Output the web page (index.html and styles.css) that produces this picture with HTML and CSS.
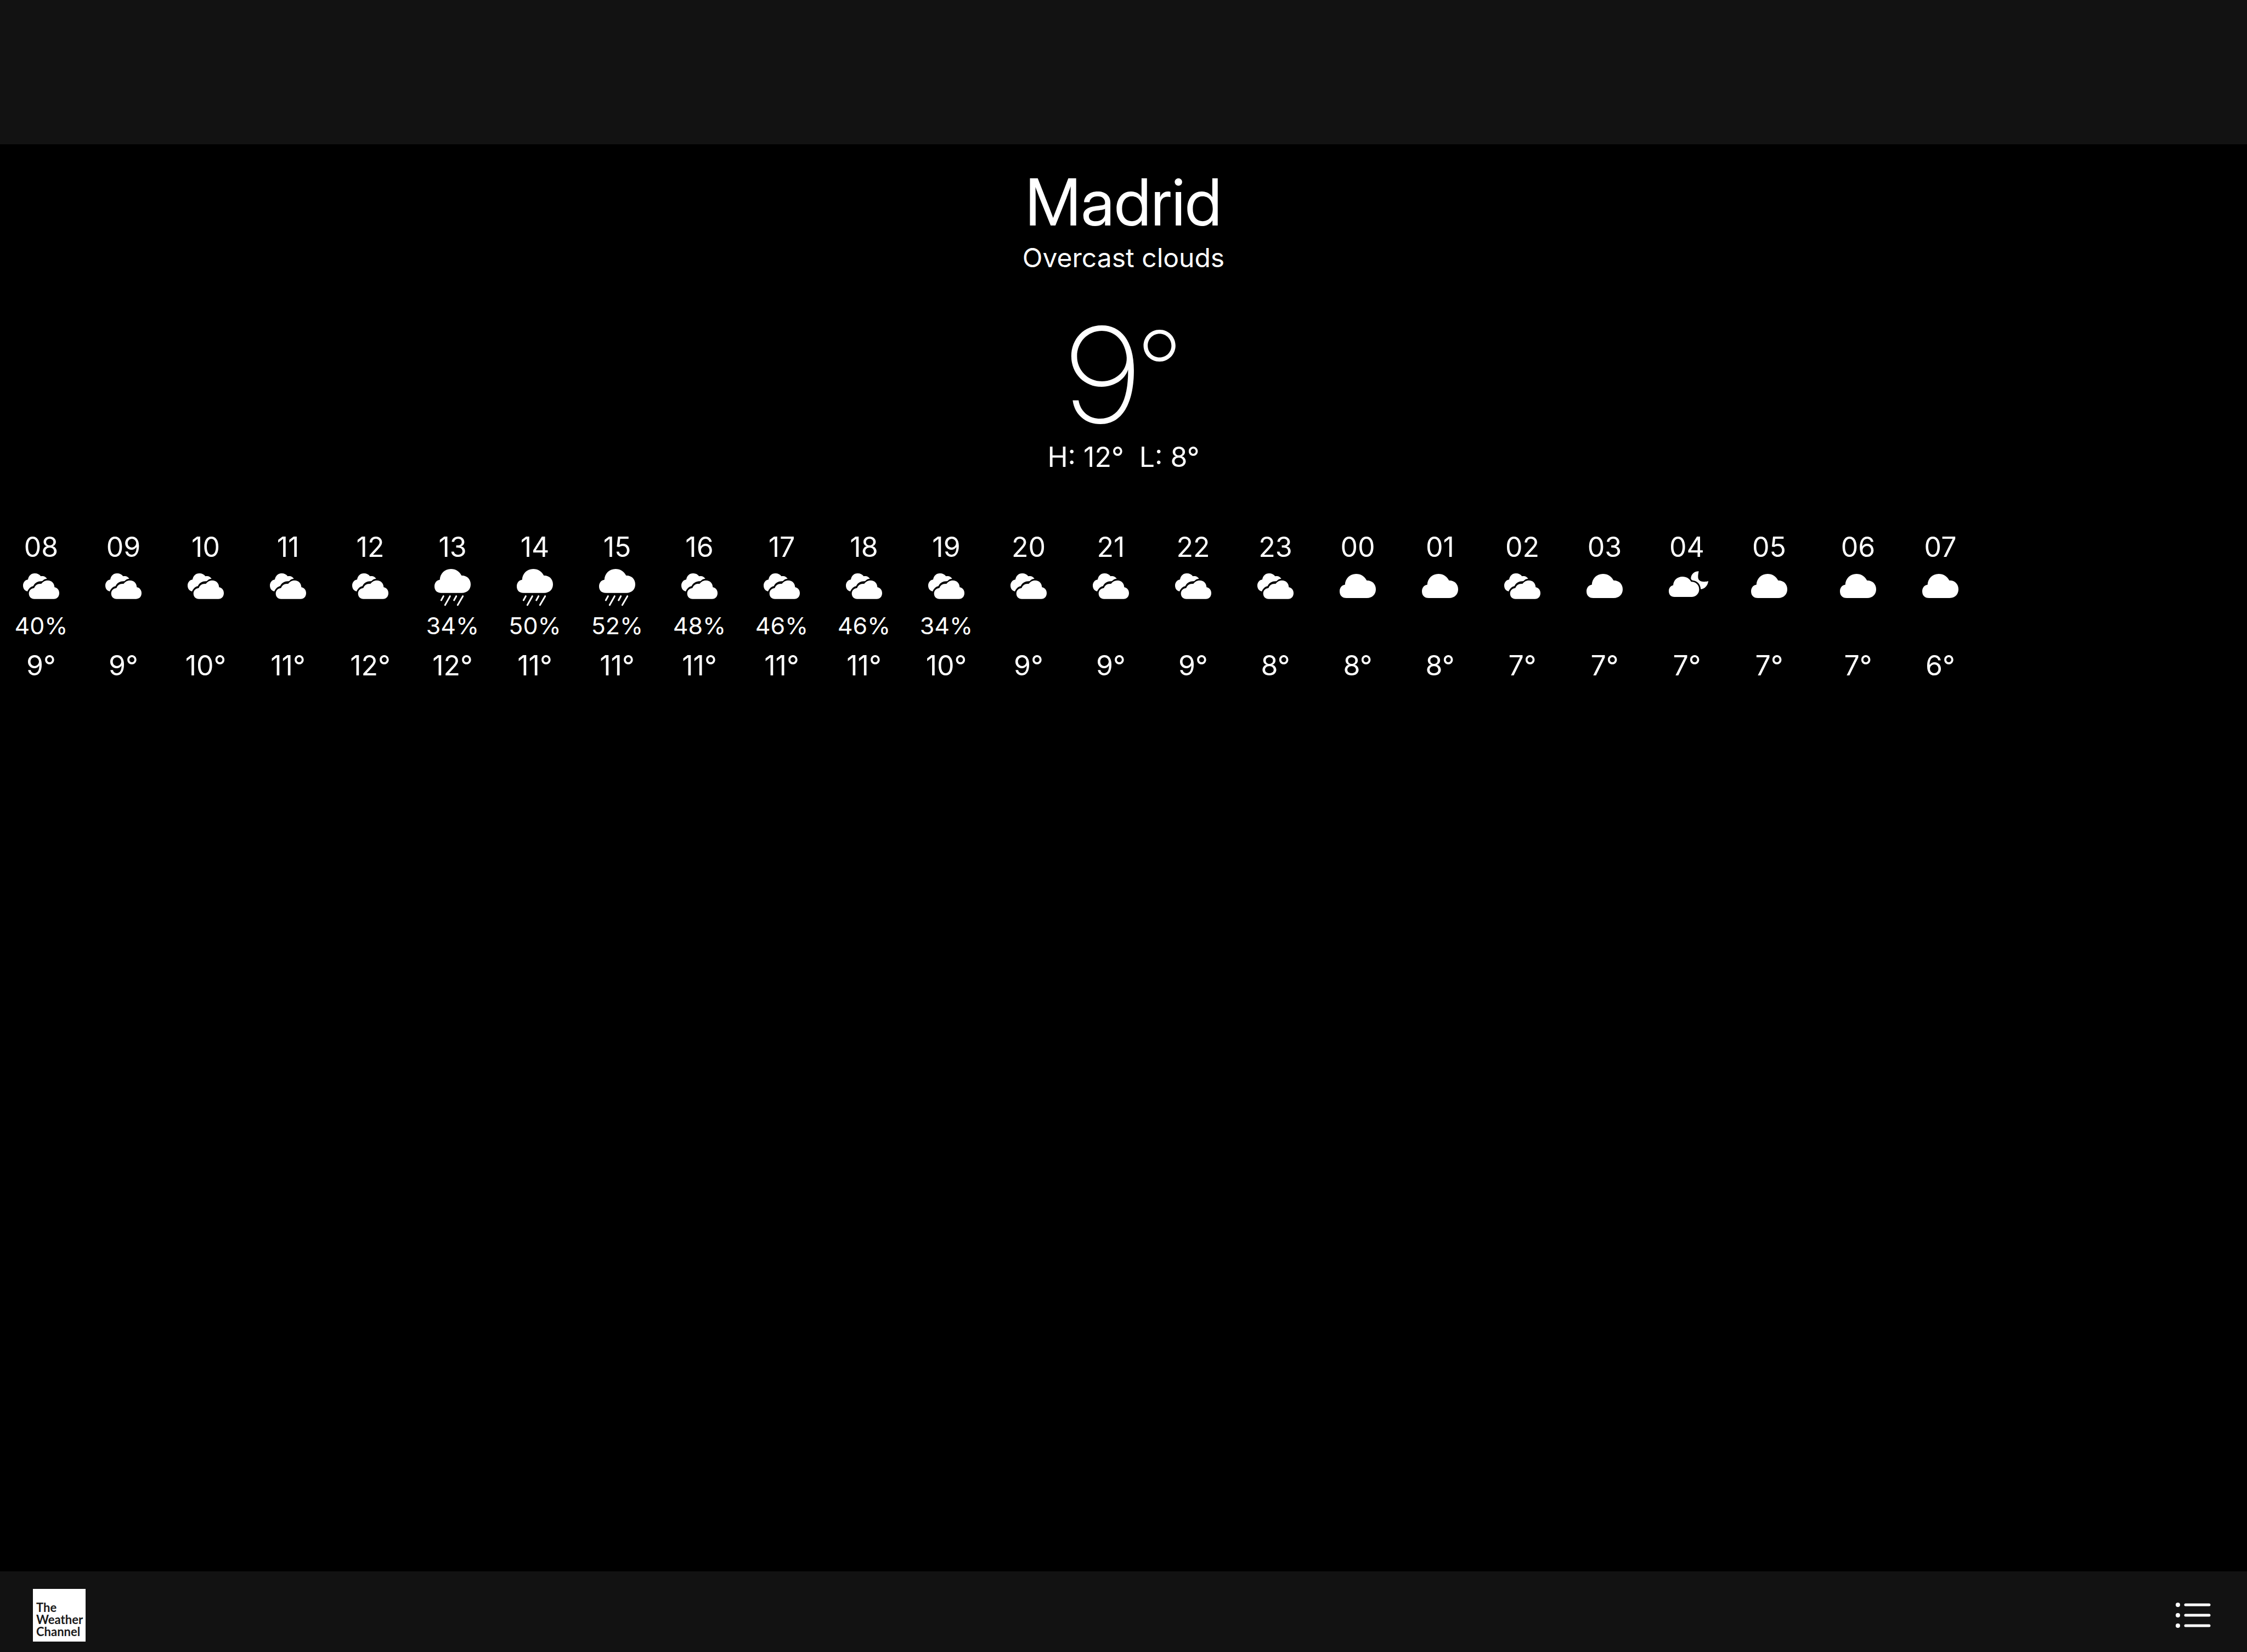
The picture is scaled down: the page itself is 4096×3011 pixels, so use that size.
FILE: index.html
```html
<!DOCTYPE html>
<html lang="en">
<head>
<meta charset="utf-8">
<meta name="viewport" content="width=device-width, initial-scale=1">
<title>Weather – Madrid</title>
<link rel="stylesheet" href="styles.css">
</head>
<body>
<svg class="sprite" aria-hidden="true">
  <symbol id="cloud" viewBox="126 228 216 216">
    <path d="M164 393C138 393 126 377 126 356C126 336 138 322 155 320C157 286 182 261 216 261C242 261 263 275 274 297C302 296 324 315 324 345C324 374 304 393 275 393Z"/>
  </symbol>
  <symbol id="clouds" viewBox="126 228 216 216">
    <path d="M150 357C135 353 126 342 126 325C126 307 137 295 153 292C156 272 170 258 190 258C205 258 216 264 223 274C238 270 249 276 257 287C246 288 238 292 231 301C209 300 190 309 182 328C169 330 157 341 150 357Z"/>
    <path d="M188 398C170 398 158 385 158 368C158 351 170 340 187 338C193 322 206 313 226 315C236 302 248 297 262 297C283 297 297 312 298 334C313 336 324 349 324 366C324 385 312 398 294 398Z"/>
  </symbol>
  <symbol id="rain" viewBox="126 228 216 216">
    <path d="M164 365C138 365 126 350 126 329C126 309 138 295 155 293C157 259 182 234 216 234C242 234 263 248 274 270C302 269 324 288 324 318C324 347 304 365 275 365Z"/>
    <path class="drops" d="M175 383L163 405M211 383L184 431M245 383L233 405M281 383L253 431"/>
  </symbol>
  <symbol id="cloud-moon" viewBox="126 228 216 216">
    <path d="M158 387C137 387 126 374 126 355C126 337 136 326 150 323C152 295 173 276 201 276C223 276 240 287 248 304C274 304 292 321 292 346C292 370 274 387 250 387Z"/>
    <path d="M290 247C265 246 246 264 247 288C249 293 253 296 257 297C282 299 299 317 301 345C322 343 340 325 342 300C333 304 322 304 311 303C296 302 286 294 286 277C286 265 288 256 290 247Z"/>
  </symbol>
</svg>

<header class="top-bar"></header>

<main class="weather">
  <h1 class="city">Madrid</h1>
  <p class="summary">Overcast clouds</p>
  <p class="current">9<span class="degree">°</span></p>
  <p class="range">H: 12°&nbsp; L: 8°</p>

  <ol class="hours">
    <li class="hour"><time>08</time><svg class="icon"><use href="#clouds"/></svg><span class="chance">40%</span><span class="temp">9°</span></li>
    <li class="hour"><time>09</time><svg class="icon"><use href="#clouds"/></svg><span class="chance"></span><span class="temp">9°</span></li>
    <li class="hour"><time>10</time><svg class="icon"><use href="#clouds"/></svg><span class="chance"></span><span class="temp">10°</span></li>
    <li class="hour"><time>11</time><svg class="icon"><use href="#clouds"/></svg><span class="chance"></span><span class="temp">11°</span></li>
    <li class="hour"><time>12</time><svg class="icon"><use href="#clouds"/></svg><span class="chance"></span><span class="temp">12°</span></li>
    <li class="hour"><time>13</time><svg class="icon"><use href="#rain"/></svg><span class="chance">34%</span><span class="temp">12°</span></li>
    <li class="hour"><time>14</time><svg class="icon"><use href="#rain"/></svg><span class="chance">50%</span><span class="temp">11°</span></li>
    <li class="hour"><time>15</time><svg class="icon"><use href="#rain"/></svg><span class="chance">52%</span><span class="temp">11°</span></li>
    <li class="hour"><time>16</time><svg class="icon"><use href="#clouds"/></svg><span class="chance">48%</span><span class="temp">11°</span></li>
    <li class="hour"><time>17</time><svg class="icon"><use href="#clouds"/></svg><span class="chance">46%</span><span class="temp">11°</span></li>
    <li class="hour"><time>18</time><svg class="icon"><use href="#clouds"/></svg><span class="chance">46%</span><span class="temp">11°</span></li>
    <li class="hour"><time>19</time><svg class="icon"><use href="#clouds"/></svg><span class="chance">34%</span><span class="temp">10°</span></li>
    <li class="hour"><time>20</time><svg class="icon"><use href="#clouds"/></svg><span class="chance"></span><span class="temp">9°</span></li>
    <li class="hour"><time>21</time><svg class="icon"><use href="#clouds"/></svg><span class="chance"></span><span class="temp">9°</span></li>
    <li class="hour"><time>22</time><svg class="icon"><use href="#clouds"/></svg><span class="chance"></span><span class="temp">9°</span></li>
    <li class="hour"><time>23</time><svg class="icon"><use href="#clouds"/></svg><span class="chance"></span><span class="temp">8°</span></li>
    <li class="hour"><time>00</time><svg class="icon"><use href="#cloud"/></svg><span class="chance"></span><span class="temp">8°</span></li>
    <li class="hour"><time>01</time><svg class="icon"><use href="#cloud"/></svg><span class="chance"></span><span class="temp">8°</span></li>
    <li class="hour"><time>02</time><svg class="icon"><use href="#clouds"/></svg><span class="chance"></span><span class="temp">7°</span></li>
    <li class="hour"><time>03</time><svg class="icon"><use href="#cloud"/></svg><span class="chance"></span><span class="temp">7°</span></li>
    <li class="hour"><time>04</time><svg class="icon"><use href="#cloud-moon"/></svg><span class="chance"></span><span class="temp">7°</span></li>
    <li class="hour"><time>05</time><svg class="icon"><use href="#cloud"/></svg><span class="chance"></span><span class="temp">7°</span></li>
    <li class="hour hour-spaced"><time>06</time><svg class="icon"><use href="#cloud"/></svg><span class="chance"></span><span class="temp">7°</span></li>
    <li class="hour"><time>07</time><svg class="icon"><use href="#cloud"/></svg><span class="chance"></span><span class="temp">6°</span></li>
  </ol>
</main>

<footer class="toolbar">
  <a class="provider" href="#">The<br>Weather<br>Channel</a>
  <button class="list-button" type="button" aria-label="Locations">
    <svg viewBox="0 0 64 48">
      <path class="rows" d="M18 5H61M18 24H61M18 43H61"/>
      <circle cx="4" cy="5" r="4"/><circle cx="4" cy="24" r="4"/><circle cx="4" cy="43" r="4"/>
    </svg>
  </button>
</footer>
</body>
</html>
```
FILE: styles.css
```css
* {
  box-sizing: border-box;
  margin: 0;
  padding: 0;
}

body {
  display: flex;
  flex-direction: column;
  min-height: 100vh;
  background: #000;
  color: #fff;
  font-family: Inter, "Liberation Sans", sans-serif;
  font-size: 50px;
  line-height: 60px;
}

.sprite {
  position: absolute;
  width: 0;
  height: 0;
}

.top-bar {
  height: 263px;
  background: #121212;
}

.weather {
  flex: 1;
  padding-top: 33px;
  text-align: center;
}

.city,
.current {
  font-family: "Inter Display", Inter, "Liberation Sans", sans-serif;
}

.city {
  font-size: 118px;
  font-weight: 400;
  line-height: 144px;
}

.summary {
  font-size: 48px;
}

.current {
  margin-top: 63px;
  font-size: 242px;
  font-weight: 200;
  line-height: 240px;
}

.degree {
  font-size: 190px;
  line-height: 0;
  vertical-align: 30px;
}

.hours {
  display: flex;
  margin-top: 104px;
  list-style: none;
}

.hour {
  display: flex;
  flex: none;
  flex-direction: column;
  width: 150px;
}

.hour-spaced {
  margin-left: 12px;
}

.icon {
  width: 72px;
  height: 72px;
  margin: 8px 0 8px 42px;
  fill: #fff;
}

.drops {
  fill: none;
  stroke: #fff;
  stroke-width: 9;
  stroke-linecap: round;
}

.chance {
  height: 50px;
  margin-bottom: 18px;
  font-size: 43px;
  line-height: 50px;
}

.toolbar {
  display: flex;
  align-items: flex-start;
  justify-content: space-between;
  height: 147px;
  padding: 32px 66px 0 60px;
  background: #121212;
}

.provider {
  width: 96px;
  height: 96px;
  padding: 23px 0 0 6px;
  background: #fff;
  color: #1a1a1a;
  font-family: Lato, "Liberation Sans", sans-serif;
  font-size: 22px;
  font-weight: 700;
  line-height: 22px;
  text-decoration: none;
}

.list-button {
  width: 64px;
  height: 96px;
  border: 0;
  background: none;
}

.list-button svg {
  display: block;
  width: 64px;
  height: 48px;
  fill: #fff;
}

.rows {
  stroke: #fff;
  stroke-width: 5;
  stroke-linecap: round;
}
```
